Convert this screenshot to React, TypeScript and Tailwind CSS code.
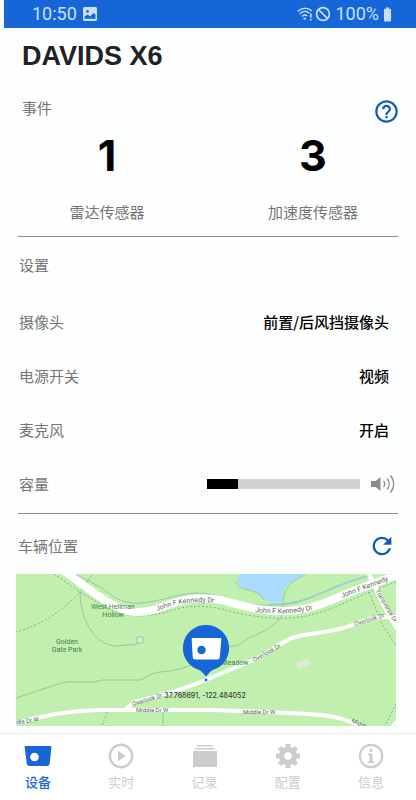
import { useState, type ReactNode } from "react";
import { MdBatteryFull, MdHelpOutline, MdRefresh } from "react-icons/md";

const settings = [
  { label: "摄像头", value: "前置/后风挡摄像头" },
  { label: "电源开关", value: "视频" },
  { label: "麦克风", value: "开启" },
];

const DashcamIcon = () => (
  <svg viewBox="0 0 28 22" className="h-[22px] w-7" fill="currentColor">
    <path
      fillRule="evenodd"
      d="M1.5 1h25c.6 0 1 .4.9 1l-1.7 16.6c-.2 1.6-1 2.4-2.6 2.4H5.4c-1.6 0-2.4-.8-2.6-2.400L.6 2c-.1-.6.3-1 .9-1zM10.500 7.700a4.300 4.300 0 1 0 0 8.600a4.300 4.300 0 0 0 0-8.600z"
    />
  </svg>
);

const PlayIcon = () => (
  <svg viewBox="0 0 26 26" className="size-[26px]" fill="none">
    <circle cx="13" cy="13" r="11.2" stroke="currentColor" strokeWidth="2.5" />
    <path d="M10 7.500v11l7.600-5.500z" fill="currentColor" />
  </svg>
);

const RecordsIcon = () => (
  <svg viewBox="0 0 26 24" className="h-6 w-[26px]" fill="currentColor">
    <path d="M5 1h16v1.500H5zM3 4h20v1.500H3zM1 7h24v16H1z" />
  </svg>
);

const GearIcon = () => (
  <svg viewBox="0 0 26 26" className="size-[26px]" fill="none">
    <circle cx="13" cy="13" r="6.4" stroke="currentColor" strokeWidth="5.2" />
    {[0, 45, 90, 135, 180, 225, 270, 315].map((deg) => (
      <path key={deg} d="M10.800 1h4.400l.5 4h-5.400z" fill="currentColor" transform={`rotate(${deg} 13 13)`} />
    ))}
  </svg>
);

const InfoIcon = () => (
  <svg viewBox="0 0 26 26" className="size-[26px]" fill="none">
    <circle cx="13" cy="13" r="11.2" stroke="currentColor" strokeWidth="2.2" />
    <path d="M11.500 5.800h3v2.900h-3zM10 10.500h4.500v7.700h1.800v1.800H9.800v-1.800h1.800v-5.900H10z" fill="currentColor" />
  </svg>
);

const tabs: { label: string; icon: ReactNode }[] = [
  { label: "设备", icon: <DashcamIcon /> },
  { label: "实时", icon: <PlayIcon /> },
  { label: "记录", icon: <RecordsIcon /> },
  { label: "配置", icon: <GearIcon /> },
  { label: "信息", icon: <InfoIcon /> },
];

function StatusBar() {
  return (
    <header className="ml-1 flex h-7 items-center bg-[#1766d8] pr-5 pl-7 font-['Roboto',sans-serif] text-lg leading-6 text-[#c9e0fb]">
      <span>10:50</span>
      <svg viewBox="0 0 14 14" className="ml-1.5 size-3.5">
        <path
          fillRule="evenodd"
          fill="currentColor"
          d="M1.500 0h11C13.300 0 14 .7 14 1.500v11c0 .8-.7 1.500-1.500 1.500h-11C.7 14 0 13.300 0 12.500v-11C0 .7.700 0 1.500 0zM1.500 11.800h11V7.500l-2-1.500-3.300 3.500L4.500 7.600l-3 2.200zM4.500 3a1.400 1.400 0 1 0 0 2.800a1.400 1.400 0 0 0 0-2.800z"
        />
      </svg>
      <div className="ml-auto flex items-center">
        <svg viewBox="0 0 16 14" className="h-3.5 w-4" fill="none" stroke="currentColor" strokeWidth="1.4">
          <path d="M.7 4.500C4.500 .4 10.800 .3 14.800 4M2.800 7C5.700 3.900 9.600 3.800 12.500 6.300M5 9.400c1.600-1.600 3.600-1.700 5.300-.4" />
          <path d="M6.500 11.600h2.200M13.800 6.500v4.300M13.800 12v1.600" strokeWidth="1.7" />
        </svg>
        <svg viewBox="0 0 16 16" className="ml-0.5 size-4" fill="none" stroke="currentColor" strokeWidth="1.7">
          <circle cx="8" cy="8" r="6.4" />
          <path d="M3.500 3.500l9 9" />
        </svg>
        <span className="ml-1">100%</span>
        <MdBatteryFull size={17} />
      </div>
    </header>
  );
}

function VehicleMap() {
  return (
    <svg
      viewBox="0 0 380 152"
      preserveAspectRatio="xMidYMid slice"
      className="h-[152px] w-full bg-[#c1efae]"
      fill="none"
      fontFamily="Roboto, sans-serif"
    >
      <defs>
        <path id="jfk-left" d="M141 37C156 31 174 26 202 29" />
        <path id="jfk-mid" d="M239 38C256 40 277 41 304 34" />
        <path id="jfk-right" d="M326 24L382 3" />
      </defs>

      {/* Lake */}
      <path d="M224 0C220 5 220 11 227 14C233 15 238 16 241 19C246 22 248 26 254 28H265C268 24 266 17 271 12C275 7 281 6 288 0z" fill="#aadaff" />

      {/* Streams and trails */}
      <g stroke="#93c9a0" strokeWidth="1">
        <path d="M61 1L84 13C94 19 100 27 116 29C136 31 158 20 180 19C204 19 216 29 244 31C270 32 284 29 298 22" />
        <path d="M64 18C64 44 78 72 101 72L121 70" />
        <path d="M220 8C225 20 240 12 248 26M289 1C275 7 268 14 267 28V40C258 54 246 58 235 63C226 66 225 74 210 72" />
        <path d="M0 124L27 115C40 111 48 107 58 108L77 108L87 106H124C132 103 134 99 144 98C158 97 168 95 178 89" />
        <path d="M147 137V152" />
      </g>
      <path d="M254 30C290 33 308 13 352 2" stroke="#92cbdc" strokeWidth="1.5" />
      <g stroke="#79b58d" strokeWidth="1" strokeDasharray="2 2">
        <path d="M38 0L64 18C80 27 90 36 105 39C130 46 145 39 164 34C188 30 204 34 220 39C246 44 276 48 305 38C325 32 340 22 380 8" />
        <path d="M76 1L64 18C48 36 24 52 0 58" />
        <path d="M353 18L365 48L380 72M91 138L86 152M380 130L369 152" />
      </g>

      {/* Roads */}
      <g stroke="#ffffff">
        <path d="M48 -3C68 11 80 22 97 31C111 39 126 40 141 35C160 27 180 21 205 26C224 31 245 38 270 37C300 36 318 24 345 14L384 0" strokeWidth="8" />
        <path d="M109 136L118 128C142 122 164 117 187 107L235 87C252 80 265 67 279 63C298 58 318 59 339 50C350 46 358 43 366 43H380" strokeWidth="4" />
        <path d="M353 0C360 14 366 30 381 54" strokeWidth="5" />
        <path d="M-2 150C20 143 48 137 82 136H191C230 137 268 138 305 141C325 143 338 148 349 154" strokeWidth="4" />
        <path d="M376 153L381 146" strokeWidth="3" />
      </g>

      {/* Buildings */}
      <path d="M279 89L292 84L295 90L282 96z" fill="#dcecd1" />
      <path d="M121 63h6v6h-6z" fill="#dcecd1" stroke="#a0c3a0" />

      {/* Street names */}
      <g fill="#5c6264" fontSize="7">
        <text><textPath href="#jfk-left">John F Kennedy Dr</textPath></text>
        <text><textPath href="#jfk-mid">John F Kennedy Dr</textPath></text>
        <text><textPath href="#jfk-right">John F Kennedy</textPath></text>
      </g>
      <g fill="#5c6264" fontSize="6">
        <text transform="translate(359 17) rotate(59)">Transverse Dr</text>
        <text transform="translate(339 52) rotate(-17)">Overlook Dr</text>
        <text transform="translate(238 88) rotate(-29)">Overlook Dr</text>
        <text transform="translate(117 132) rotate(-17)">Overlook Dr</text>
        <text x="120" y="138">Middle Dr W</text>
        <text x="227" y="140">Middle Dr W</text>
        <text transform="translate(-9 152) rotate(-9)">Middle Dr W</text>
        <text transform="translate(335 148) rotate(26)">Middle Dr</text>
      </g>

      {/* Parks */}
      <g fill="#417f51" fontSize="7" textAnchor="middle">
        <text x="97" y="35">West Hellman</text>
        <text x="97" y="43">Hollow</text>
        <text x="51" y="70">Golden</text>
        <text x="51" y="78">Gate Park</text>
        <text x="219" y="91">Meadow</text>
      </g>

      {/* Car marker */}
      <path d="M190 51a23 23 0 0 1 8 44.600c-3 1.200-5 3.400-8 7c-3-3.600-5-5.800-8-7A23 23 0 0 1 190 51z" fill="#1766d8" />
      <path
        fillRule="evenodd"
        fill="#ffffff"
        d="M177 64h27c1 0 1.400.4 1.300 1.300l-1.500 17.700c-.2 1.700-1 2.500-2.700 2.500h-21.700c-1.700 0-2.500-.8-2.700-2.500l-1-17.700c0-.9.300-1.300 1.300-1.300zM185.500 71.800a4.200 4.200 0 1 0 0 8.400a4.200 4.200 0 0 0 0-8.400z"
      />
      <circle cx="190" cy="106" r="2" fill="#1766d8" stroke="#ffffff" strokeWidth="1" />
      <text x="189" y="124" fontFamily="Inter, sans-serif" fontSize="7" fontWeight="500" fill="#36443a" textAnchor="middle">
        37.768691, -122.484052
      </text>
    </svg>
  );
}

export default function App() {
  const [activeTab, setActiveTab] = useState("设备");
  const [volume, setVolume] = useState(20);

  return (
    <div className="flex min-h-screen flex-col bg-[#fdfefe] font-['Noto_Sans_CJK_SC',sans-serif] text-[15px] leading-6 text-[#747576]">
      <StatusBar />

      <main className="flex flex-col">
        <h1 className="px-[22px] pt-3 font-['Liberation_Sans',sans-serif] text-[27px] leading-8 font-bold text-[#202223]">
          DAVIDS X6
        </h1>

        {/* Events */}
        <section>
          <div className="mt-6 flex items-start justify-between pr-4 pl-[22px]">
            <h2>事件</h2>
            <button aria-label="帮助" className="pt-0.5 text-[#1559b8]">
              <MdHelpOutline size={27} />
            </button>
          </div>
          <div className="mt-2 grid grid-cols-2 pl-1 text-center">
            <div>
              <p className="font-['Inter',sans-serif] text-[43px] leading-[44px] font-bold text-black">1</p>
              <p className="mt-[23px]">雷达传感器</p>
            </div>
            <div>
              <p className="font-['Inter',sans-serif] text-[43px] leading-[44px] font-bold text-black">3</p>
              <p className="mt-[23px]">加速度传感器</p>
            </div>
          </div>
        </section>

        <hr className="mx-[18px] mt-3 border-[#8c8d8e]" />

        {/* Settings */}
        <section className="pr-[27px] pl-[19px]">
          <h2 className="mt-4 mb-[18px]">设置</h2>
          {settings.map(({ label, value }) => (
            <div key={label} className="flex h-[54px] items-center justify-between">
              <span>{label}</span>
              <span className="font-medium text-black">{value}</span>
            </div>
          ))}
          <div className="flex h-[54px] items-center justify-between">
            <label htmlFor="volume">容量</label>
            <div className="-mr-1.5 flex items-center gap-2.5">
              <input
                id="volume"
                type="range"
                min={0}
                max={100}
                value={volume}
                onChange={(e) => setVolume(Number(e.target.value))}
                className="h-2.5 w-[153px] appearance-none [&::-webkit-slider-thumb]:size-0 [&::-webkit-slider-thumb]:appearance-none"
                style={{ background: `linear-gradient(to right, #000 ${volume}%, #d0d1d2 ${volume}%)` }}
              />
              <svg viewBox="0 0 25 20" className="h-5 w-[25px]" fill="none" stroke="#8b8c8d" strokeWidth="1.3">
                <path d="M1 7h4.500L10.500 3v14L5.500 13H1z" fill="#8b8c8d" stroke="none" />
                <path d="M13.500 7c1.500 1.800 1.500 4.200 0 6M17 4.500c2.800 3.300 2.800 7.700 0 11M20.500 1.500c4.200 5 4.200 12 0 17" />
              </svg>
            </div>
          </div>
        </section>

        <hr className="mx-[18px] mt-0.5 border-[#8c8d8e]" />

        {/* Location */}
        <section>
          <div className="mt-5 flex h-6 items-center justify-between pr-5 pl-[18px]">
            <h2>车辆位置</h2>
            <button aria-label="刷新" className="text-[#1559b8]">
              <MdRefresh size={28} />
            </button>
          </div>
          <div className="mt-4 pr-5 pl-4">
            <VehicleMap />
          </div>
        </section>
      </main>

      <nav className="mt-auto flex justify-between border-t border-[#ededf2] bg-white pt-2 pr-[31px] pb-1.5 pl-6">
        {tabs.map(({ label, icon }) => (
          <button
            key={label}
            onClick={() => setActiveTab(label)}
            className={`flex w-7 flex-col items-center text-[13px] leading-6 ${
              activeTab === label ? "font-medium text-[#1766d8]" : "text-[#cbccce]"
            }`}
          >
            <span className="flex h-7 items-center">{icon}</span>
            {label}
          </button>
        ))}
      </nav>
    </div>
  );
}
